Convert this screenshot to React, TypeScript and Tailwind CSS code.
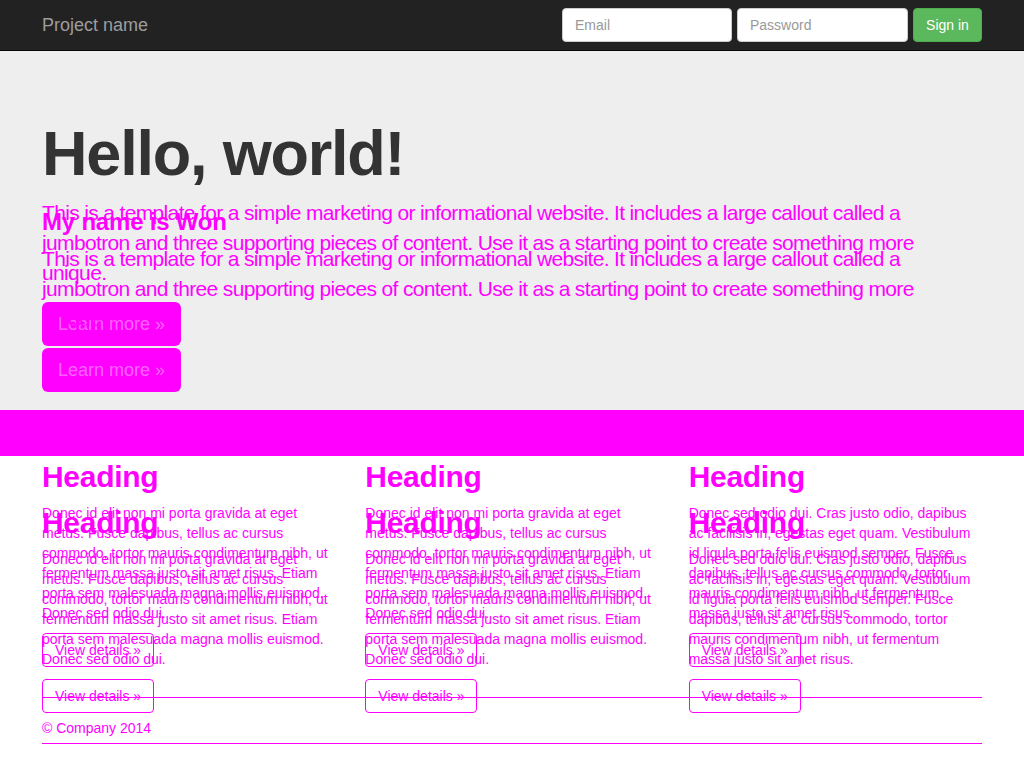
import React from 'react';

const LEAD = [
    'This is a template for a simple marketing or informational website. It includes a large callout called a',
    'jumbotron and three supporting pieces of content. Use it as a starting point to create something more',
    'unique.',
];

const COLUMNS = [
    [
        'Donec id elit non mi porta gravida at eget',
        'metus. Fusce dapibus, tellus ac cursus',
        'commodo, tortor mauris condimentum nibh, ut',
        'fermentum massa justo sit amet risus. Etiam',
        'porta sem malesuada magna mollis euismod.',
        'Donec sed odio dui.',
    ],
    [
        'Donec id elit non mi porta gravida at eget',
        'metus. Fusce dapibus, tellus ac cursus',
        'commodo, tortor mauris condimentum nibh, ut',
        'fermentum massa justo sit amet risus. Etiam',
        'porta sem malesuada magna mollis euismod.',
        'Donec sed odio dui.',
    ],
    [
        'Donec sed odio dui. Cras justo odio, dapibus',
        'ac facilisis in, egestas eget quam. Vestibulum',
        'id ligula porta felis euismod semper. Fusce',
        'dapibus, tellus ac cursus commodo, tortor',
        'mauris condimentum nibh, ut fermentum',
        'massa justo sit amet risus.',
    ],
];

function Lines({ lines }: { lines: string[] }) {
    return (
        <>
            {lines.map((line, i) => (
                <span key={i} className="block whitespace-nowrap">
                    {line}
                </span>
            ))}
        </>
    );
}

function LearnMore() {
    return (
        <a className="flex h-[44px] w-[139px] items-center justify-center rounded-[6px] bg-[#ff00ff] text-[18px] text-white/40">
            Learn more &raquo;
        </a>
    );
}

function Marketing({ offset }: { offset: 'a' | 'b' }) {
    return (
        <div className={`col-start-1 row-start-1 ${offset === 'a' ? 'pt-[4px]' : 'pt-[50px]'}`}>
            <div className="grid grid-cols-3 gap-x-[30px]">
                {COLUMNS.map((lines, i) => (
                    <div key={i}>
                        <h2 className="mb-[10px] text-[30px] font-bold leading-[33px] tracking-[-0.3px] text-[#ff00ff]">Heading</h2>
                        <p className="mb-[10px] text-[14px] leading-[20px] text-[#ff00ff]">
                            <Lines lines={lines} />
                        </p>
                        <a className="inline-block h-[34px] rounded-[4px] border border-[#ff00ff] px-[12px] text-[14px] leading-[32px] text-[#ff00ff]">
                            View details &raquo;
                        </a>
                    </div>
                ))}
            </div>
            <hr className="mt-[30px] border-t border-[#ff00ff]" />
            {offset === 'a' && (
                <footer className="pt-[20px] text-[14px] leading-[20px] text-[#ff00ff]">&copy; Company 2014</footer>
            )}
        </div>
    );
}

export default function App() {
    return (
        <div className="h-[768px] overflow-hidden bg-white font-['Liberation_Sans',Arial,sans-serif]">
            <nav className="h-[51px] border-b border-[#080808] bg-[#222]">
                <div className="mx-auto flex h-[50px] w-[940px] items-center justify-between">
                    <span className="text-[18px] text-[#9d9d9d]">Project name</span>
                    <form className="flex gap-[5px]">
                        <input
                            placeholder="Email"
                            className="h-[34px] w-[170px] rounded-[4px] border border-[#ccc] bg-white px-[12px] text-[14px] text-[#555] outline-none placeholder:text-[#999]"
                        />
                        <input
                            type="password"
                            placeholder="Password"
                            className="h-[34px] w-[171px] rounded-[4px] border border-[#ccc] bg-white px-[12px] text-[14px] text-[#555] outline-none placeholder:text-[#999]"
                        />
                        <button
                            type="button"
                            className="h-[34px] w-[69px] rounded-[4px] border border-[#4cae4c] bg-[#5cb85c] text-[14px] text-white"
                        >
                            Sign in
                        </button>
                    </form>
                </div>
            </nav>

            <div className="h-[359px] bg-[#eee]">
                <div className="mx-auto grid w-[940px]">
                    <div className="col-start-1 row-start-1 pt-[68px]">
                        <h1 className="mb-[10px] text-[63px] font-bold leading-[69px] tracking-[-1.2px] text-[#333]">
                            Hello, world!
                        </h1>
                        <p className="mb-[14px] text-[21px] leading-[30px] tracking-[-0.65px] text-[#ff00ff]">
                            <Lines lines={LEAD} />
                        </p>
                        <LearnMore />
                    </div>
                    <div className="col-start-1 row-start-1 pt-[158px]">
                        <h2 className="mb-[9px] text-[24px] font-bold leading-[26px] tracking-[-0.2px] text-[#ff00ff]">
                            My name is Won
                        </h2>
                        <p className="mb-[14px] text-[21px] leading-[30px] tracking-[-0.65px] text-[#ff00ff]">
                            <Lines lines={LEAD} />
                        </p>
                        <LearnMore />
                    </div>
                </div>
            </div>

            <div className="h-[46px] bg-[#ff00ff]" />

            <div className="mx-auto grid w-[940px]">
                <Marketing offset="a" />
                <Marketing offset="b" />
            </div>
        </div>
    );
}
